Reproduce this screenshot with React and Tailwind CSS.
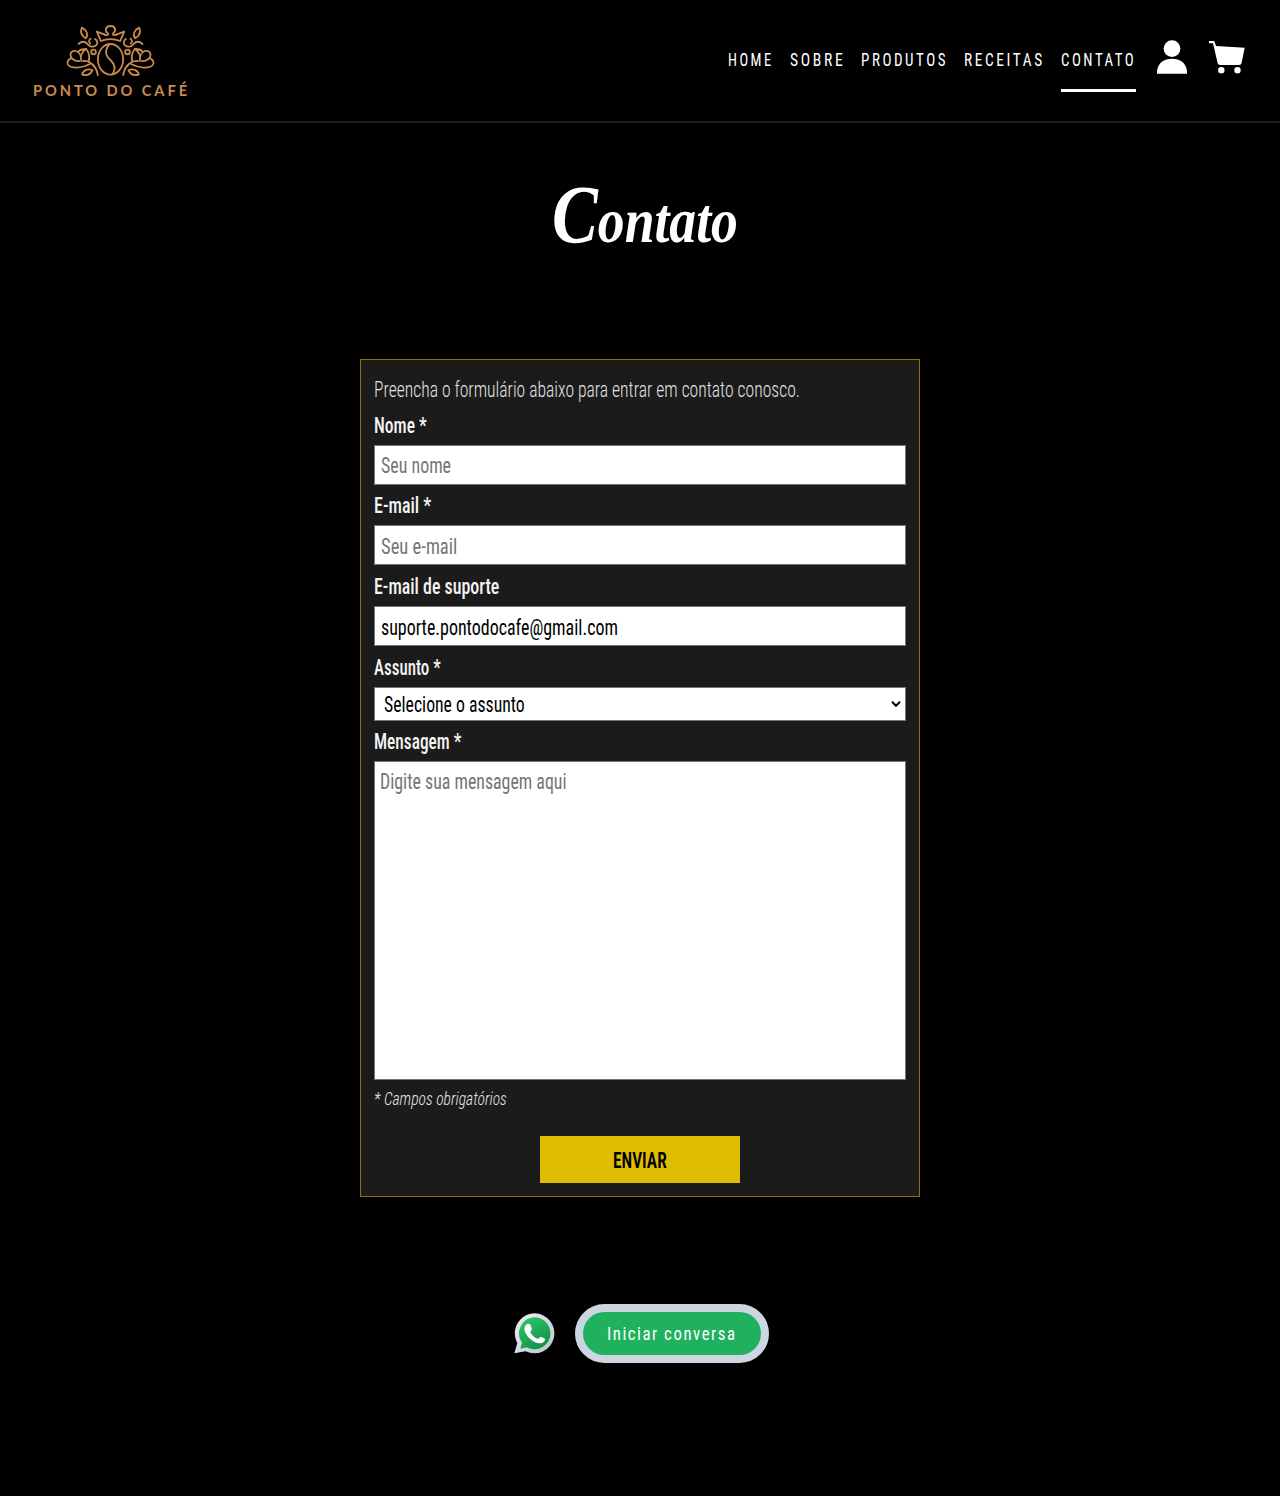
import { useLayoutEffect, useRef } from "react";

// Condenses a single line of text horizontally so that it fills its container.
function Fit({ className = "", textClass = "", children }) {
  const outer = useRef(null);
  const inner = useRef(null);
  useLayoutEffect(() => {
    const k = outer.current.clientWidth / inner.current.offsetWidth;
    inner.current.style.transform = `scaleX(${k})`;
  }, []);
  return (
    <span ref={outer} className={`block whitespace-nowrap ${className}`}>
      <span ref={inner} className={`inline-block origin-left ${textClass}`}>{children}</span>
    </span>
  );
}

function Logo() {
  const side = (
    <g transform="translate(126 36)">
      <path d="M60 18c-5 12-2 24 12 32c8-12 4-24-12-32z" />
      <path d="M50 67c10-9 20-7 26-1c4 5 6 9 13 9c12 1 19-7 17-15c-1-4-3-6-6-8M86 51c-6 4-5 10-1 15" />
      <circle cx="95" cy="91" r="7" />
      <path d="M108 160c-3-20-12-31-25-38c-6-4-13-5-19-4" />
      <path d="M52 118C37 119 26 110 26 99c0-9 8-13 16-11c11 3 17 16 16 30" />
      <path d="M49 91c4-7 12-9 24-9M57 104c3-10 9-18 16-22c9 10 12 26 7 38" />
      <path d="M27 110c-9 4-13 13-8 20c10 11 42 10 64-2" />
      <path d="M61 158c4-14 18-18 31-12c-5 12-18 18-31 12z" />
    </g>
  );
  return (
    <svg viewBox="130 40 284 165" className="h-[55px] w-[95px]" fill="none" stroke="#c98b4d" strokeWidth="5.4" strokeLinecap="round" strokeLinejoin="round">
      {side}
      <g transform="translate(544 0) scale(-1 1)">{side}</g>
      <path d="M243 94l-12-28l24 9M301 94l12-28l-24 9M243 94q29-11 58 0" />
      <path d="M255 75c6 3 12 1 9-4c-11-8-6-22 8-22s19 14 8 22c-3 5 3 7 9 4" />
      <ellipse cx="272" cy="149" rx="38" ry="46" />
      <path d="M268 104c-18 25-6 38 4 47c12 12 18 24 7 42" />
    </svg>
  );
}

const nav = [
  ["HOME", "w-[46px]"],
  ["SOBRE", "w-[55px]"],
  ["PRODUTOS", "w-[87px]"],
  ["RECEITAS", "w-[81px]"],
  ["CONTATO", "w-[75px]"],
];

function Label({ children, w, h = "h-[41px]" }) {
  return (
    <label className={`flex items-center font-medium text-[#f4f4f4] ${h}`}>
      <Fit className={w}>{children}</Fit>
    </label>
  );
}

function Box({ children, w, className }) {
  return (
    <div className={`border border-[#767676] bg-white ${className}`}>
      <Fit className={w}>{children}</Fit>
    </div>
  );
}

function WhatsApp() {
  return (
    <svg viewBox="0 0 123 123" className="h-[41px] w-[41px]">
      <defs>
        <linearGradient id="rim" x1="0" y1="0" x2="1" y2="1"><stop stopColor="#eef2f6" /><stop offset="1" stopColor="#b8c3d0" /></linearGradient>
        <linearGradient id="leaf" x1="0" y1="0" x2="0.6" y2="1"><stop stopColor="#2dc96f" /><stop offset="1" stopColor="#149447" /></linearGradient>
      </defs>
      <path fill="url(#rim)" d="M62 1a60 60 0 1 1-27 114L1 121l9-31A60 60 0 0 1 62 1z" />
      <path fill="url(#leaf)" d="M62 13a48 48 0 1 1-24 90l-19 4l5-18A48 48 0 0 1 62 13z" />
      <path fill="#fff" d="M36 35c5-5 12-3 14 2l3 10c2 5-4 7-4 11c5 10 12 16 21 19c5 0 7-7 12-5l9 4c5 3 0 11-5 13c-10 5-25 0-37-11c-14-12-24-31-13-43z" />
    </svg>
  );
}

export default function App() {
  return (
    <div className="flex min-h-[1496px] flex-col bg-black font-['Roboto',sans-serif] text-white [font-stretch:75%]">
      <header className="flex h-[123px] items-start justify-between border-b-2 border-[#1b1b1b] pr-[35px] pl-[33px]">
        <a className="mt-[23px] flex w-[155px] flex-col items-center text-[#c98b4d]">
          <Logo />
          <Fit className="w-[157px] self-start font-['Lato',sans-serif] text-[15px] leading-6 font-bold tracking-[3px]">PONTO DO CAFÉ</Fit>
        </a>
        <div className="flex items-start">
          <nav className="mt-[47px] flex gap-4 text-[17.6px] leading-[26px] font-[450] tracking-[3px]">
            {nav.map(([t, w]) => (
              <a key={t} className={t === "CONTATO" ? "border-b-[3px] border-white pb-4" : ""}>
                <Fit className={w}>{t}</Fit>
              </a>
            ))}
          </nav>
          <svg viewBox="0 0 30 34" className="mt-10 ml-[21px] h-[34px] w-[30px]" fill="#fff">
            <circle cx="15" cy="8.6" r="8.4" />
            <path d="M0 33.7V31C1 23 7 18.8 15 18.8S29 23 30 31v2.7z" />
          </svg>
          <svg viewBox="0 0 36 33" className="mt-[41px] ml-[22px] h-[33px] w-9" fill="#fff">
            <path d="M0 0h5.2l1.9 5L35.7 6.8 32.6 22Q32.2 24 30.2 24H11Q9 24 8.6 22L4 2.2H0z" />
            <circle cx="12.3" cy="29.2" r="3.2" />
            <circle cx="28.5" cy="29.2" r="3.2" />
          </svg>
        </div>
      </header>

      <main className="flex flex-col items-center">
        <h1 className="mt-[52px] flex h-[80px] w-[186px] translate-x-[5px] font-['Liberation_Serif',serif] text-[64px] leading-[80px] font-bold italic">
          <Fit className="w-[186px]" textClass="first-letter:text-[82px]">Contato</Fit>
        </h1>

        <form className="mt-[104px] flex h-[838px] w-[560px] flex-col border border-[#8b7500] bg-[#1b1b1b] px-[13px] text-[21.5px] leading-[30px]">
          <p className="mt-[15px] h-[29px] font-light text-[#e2e2e2]">
            <Fit className="w-[426px]">Preencha o formulário abaixo para entrar em contato conosco.</Fit>
          </p>
          <Label w="w-[53px]" h="h-[41px] pt-[2px]">Nome *</Label>
          <Box w="w-[70px]" className="h-10 px-[6px] pt-[5px] text-[#757575]">Seu nome</Box>
          <Label w="w-[57px]" h="h-10 pt-px">E-mail *</Label>
          <Box w="w-[76px]" className="h-10 px-[6px] pt-[6px] text-[#757575]">Seu e-mail</Box>
          <Label w="w-[125px]" h="h-[41px] pt-[2px]">E-mail de suporte</Label>
          <Box w="w-[237px]" className="h-10 px-[6px] pt-[6px] text-black">suporte.pontodocafe@gmail.com</Box>
          <Label w="w-[67px]" h="h-[41px] pt-[2px]">Assunto *</Label>
          <div className="flex h-[34px] items-center justify-between border border-[#767676] bg-white pr-1 pl-[9px] text-black">
            <Fit className="w-[141px] pt-px">Selecione o assunto</Fit>
            <svg viewBox="0 0 10 6" className="h-[6px] w-[10px]" fill="none" stroke="#000" strokeWidth="2"><path d="M1 .8l4 4 4-4" /></svg>
          </div>
          <Label w="w-[87px]" h="h-10 pt-px">Mensagem *</Label>
          <Box w="w-[187px]" className="h-[319px] px-[5.4px] pt-[5px] text-[#757575]">Digite sua mensagem aqui</Box>
          <p className="mt-1 text-[17.6px] font-light text-[#e8e8e8] italic"><Fit className="w-[133px]">* Campos obrigatórios</Fit></p>
          <button type="button" className="mt-[22px] flex h-[47px] w-[200px] items-center justify-center self-center bg-[#dfbd02] pt-[3px] font-semibold text-black">
            <Fit className="w-[54px]">ENVIAR</Fit>
          </button>
        </form>

        <div className="mt-[107px] mr-[-2px] flex items-center gap-5">
          <WhatsApp />
          <a className="flex h-[59px] w-[194px] items-center justify-center rounded-full border-8 border-[#cdd5e0] bg-[#20b15f] pt-px text-[17.6px] font-[450] tracking-[1.6px]">
            <Fit className="w-[130px]">Iniciar conversa</Fit>
          </a>
        </div>
      </main>
    </div>
  );
}
